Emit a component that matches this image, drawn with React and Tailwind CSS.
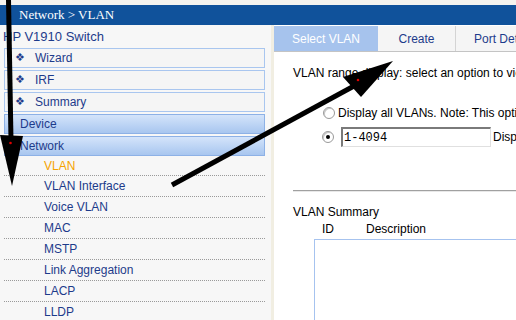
const menu = ["Wizard", "IRF", "Summary"];
const groups = ["Device", "Network"];
const subItems = [
  "VLAN",
  "VLAN Interface",
  "Voice VLAN",
  "MAC",
  "MSTP",
  "Link Aggregation",
  "LACP",
  "LLDP",
];

const Radio = ({ checked }) => (
  <span className="shrink-0 w-[12px] h-[12px] rounded-full border border-[#9a9a9a] bg-white flex items-center justify-center shadow-[inset_1px_1px_0_#c8c8c8]">
    {checked && <span className="w-[4px] h-[4px] rounded-full bg-black" />}
  </span>
);

const App = () => {
  return (
    <div className="relative w-[516px] h-[320px] overflow-hidden bg-white font-['Liberation_Sans',Arial,sans-serif]">
      {/* Top strip + breadcrumb bar */}
      <div className="h-[5px] bg-[#f5f3ef]" />
      <div className="h-[20px] bg-[#10529b] flex items-center pl-[19px] text-white text-[13px] font-['Liberation_Serif',serif]">
        Network &gt; VLAN
      </div>

      <div className="flex h-[295px] overflow-hidden">
        {/* Sidebar */}
        <div className="w-[271px] shrink-0 bg-[#f7f7f7] flex flex-col">
          <div className="shrink-0 h-[23px] flex items-center pl-[3px] text-[13px] text-[#1d3b8b] whitespace-nowrap">
            HP V1910 Switch
          </div>
          <div className="shrink-0 flex flex-col gap-[2px] pl-[4px] pr-[6px]">
            {menu.map((m) => (
              <div
                key={m}
                className="shrink-0 h-[20px] border border-[#a9c6ef] bg-[#f5f5f5] flex items-center text-[12px] text-[#1d3b8b]"
              >
                <span className="w-[30px] pl-[10px] text-[11px] font-['DejaVu_Sans',sans-serif]">
                  ❖
                </span>
                <span>{m}</span>
              </div>
            ))}
            {groups.map((g) => (
              <div
                key={g}
                className="shrink-0 h-[20px] border border-[#8db1e6] bg-linear-to-b from-[#d4e4fa] via-[#bed5f5] to-[#a8c6ef] flex items-center pl-[15px] text-[12px] text-[#1d3b8b]"
              >
                {g}
              </div>
            ))}
          </div>
          <div className="shrink-0 flex flex-col ml-[4px] mr-[6px]">
            {subItems.map((s, i) => (
              <div
                key={s}
                className={`shrink-0 ${i === 0 ? "h-[20px]" : "h-[21px]"} border-b border-dotted border-[#9a9a9a] flex items-center pl-[40px] text-[12px] whitespace-nowrap ${
                  i === 0 ? "text-[#f5a300]" : "text-[#1d3b8b]"
                }`}
              >
                {s}
              </div>
            ))}
          </div>
        </div>

        <div className="w-[3px] shrink-0 bg-[#f1eee2]" />

        {/* Content */}
        <div className="flex-1 min-w-0 flex flex-col text-[12px] text-black whitespace-nowrap">
          <div className="shrink-0 mt-[1px] h-[26px] flex border-b border-[#c4c4c4] bg-[#f5f5f5]">
            <div className="shrink-0 w-[104px] bg-[#a6c3ed] text-white flex items-center justify-center">
              Select VLAN
            </div>
            <div className="shrink-0 w-[78px] border-r border-[#d4d4d4] text-[#1d3b8b] flex items-center justify-center">
              Create
            </div>
            <div className="shrink-0 pl-[18px] text-[#1d3b8b] flex items-center">
              Port Detail
            </div>
          </div>

          <div className="shrink-0 pl-[19px] mt-[14px] leading-[14px]">
            VLAN range display: select an option to view VLANs
          </div>

          <div className="shrink-0 pl-[49px] mt-[26px] flex items-center gap-[3px] leading-[14px]">
            <Radio />
            <span>Display all VLANs. Note: This option may take a while</span>
          </div>

          <div className="shrink-0 pl-[48px] mt-[7px] flex items-center">
            <Radio checked />
            <div className="shrink-0 ml-[7px] w-[150px] h-[20px] border-t-2 border-l-2 border-t-[#7a7a7a] border-l-[#7a7a7a] border-b border-r border-b-[#e0e0e0] border-r-[#e0e0e0] bg-white flex items-center pl-[1px] font-['Liberation_Mono',monospace] text-[12px]">
              1-4094
            </div>
            <span className="ml-[2px]">Display</span>
          </div>

          <div className="shrink-0 ml-[19px] mt-[43px] border-t border-b border-t-[#a0a0a0] border-b-[#e8e8e8] h-[2px]" />

          <div className="shrink-0 pl-[19px] mt-[13px] leading-[14px]">VLAN Summary</div>
          <div className="shrink-0 flex leading-[14px] mt-[3px]">
            <span className="pl-[48px] w-[92px]">ID</span>
            <span>Description</span>
          </div>
          <div className="ml-[40px] mt-[3px] flex-1 border-l border-t border-[#a6c3ef]" />
        </div>
      </div>

      {/* Annotation arrows */}
      <svg
        className="absolute inset-0 pointer-events-none"
        width="516"
        height="320"
        viewBox="0 0 516 320"
      >
        <line x1="8.5" y1="0" x2="11" y2="140" stroke="black" strokeWidth="5" />
        <polygon points="0,135 23,136 12,186" fill="black" />
        <circle cx="10.5" cy="143" r="1.3" fill="#e00000" />
        <line x1="172" y1="185" x2="354" y2="86" stroke="black" strokeWidth="5" />
        <polygon points="343,77 393,61 361,97" fill="black" />
        <circle cx="358" cy="80" r="1.3" fill="#e00000" />
      </svg>
    </div>
  );
};

export default App;
